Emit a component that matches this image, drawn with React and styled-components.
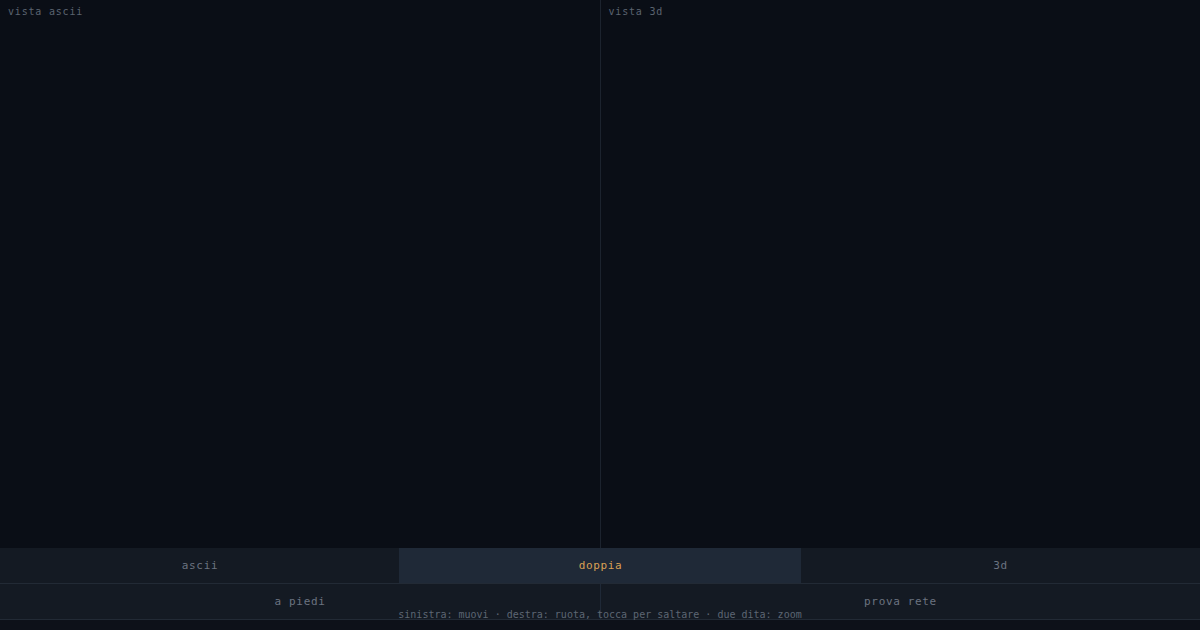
import React, { useState } from "react";
import styled, { createGlobalStyle } from "styled-components";

const GlobalStyle = createGlobalStyle`
  html, body, #root {
    margin: 0;
    height: 100%;
    background: #0a0e16;
  }
  * {
    box-sizing: border-box;
  }
`;

const mono = `"DejaVu Sans Mono", "Liberation Mono", monospace`;

const Screen = styled.div`
  position: relative;
  height: 100vh;
  display: flex;
  flex-direction: column;
  font-family: ${mono};
  background: #0a0e16;
  overflow: hidden;
`;

const Views = styled.div`
  flex: 1;
  display: flex;
  min-height: 0;
`;

const Pane = styled.div`
  flex: 1;
  position: relative;
  & + & {
    border-left: 1px solid #1c232e;
  }
`;

const PaneLabel = styled.div`
  position: absolute;
  top: 6px;
  left: 8px;
  font-size: 10px;
  letter-spacing: 0.08em;
  color: #5b6370;
  pointer-events: none;
`;

const Controls = styled.div`
  background: #141a23;
  padding-bottom: 10px;
  box-shadow: inset 0 -10px 0 #0d1119;
`;

const Row = styled.div`
  display: grid;
  grid-template-columns: repeat(${(p) => p.$cols}, 1fr);
  height: 36px;
  border-bottom: 1px solid #222a35;
`;

const Tab = styled.button`
  border: 0;
  margin: 0;
  padding: 0;
  font-family: ${mono};
  font-size: 11px;
  letter-spacing: 0.06em;
  cursor: pointer;
  position: relative;
  background: ${(p) => (p.$active ? "#1f2937" : "transparent")};
  color: ${(p) => (p.$active ? "#d9a054" : "#6b7380")};
  box-shadow: ${(p) =>
    p.$active ? "-1px 0 0 #1f2937, 1px 0 0 #1f2937" : "none"};
  & + & {
    border-left: 1px solid ${(p) => (p.$active ? "#1f2937" : "#222a35")};
  }
`;

const Hint = styled.div`
  position: absolute;
  left: 0;
  right: 0;
  bottom: 9px;
  text-align: center;
  font-size: 10px;
  line-height: 12px;
  color: #5d6673;
  pointer-events: none;
`;

const modes = ["ascii", "doppia", "3d"];

export default function App() {
  const [mode, setMode] = useState("doppia");

  return (
    <Screen>
      <GlobalStyle />
      <Views>
        <Pane>
          <PaneLabel>vista ascii</PaneLabel>
        </Pane>
        <Pane>
          <PaneLabel>vista 3d</PaneLabel>
        </Pane>
      </Views>
      <Controls>
        <Row $cols={3}>
          {modes.map((m) => (
            <Tab key={m} $active={m === mode} onClick={() => setMode(m)}>
              {m}
            </Tab>
          ))}
        </Row>
        <Row $cols={2}>
          <Tab>a piedi</Tab>
          <Tab>prova rete</Tab>
        </Row>
      </Controls>
      <Hint>sinistra: muovi · destra: ruota, tocca per saltare · due dita: zoom</Hint>
    </Screen>
  );
}
